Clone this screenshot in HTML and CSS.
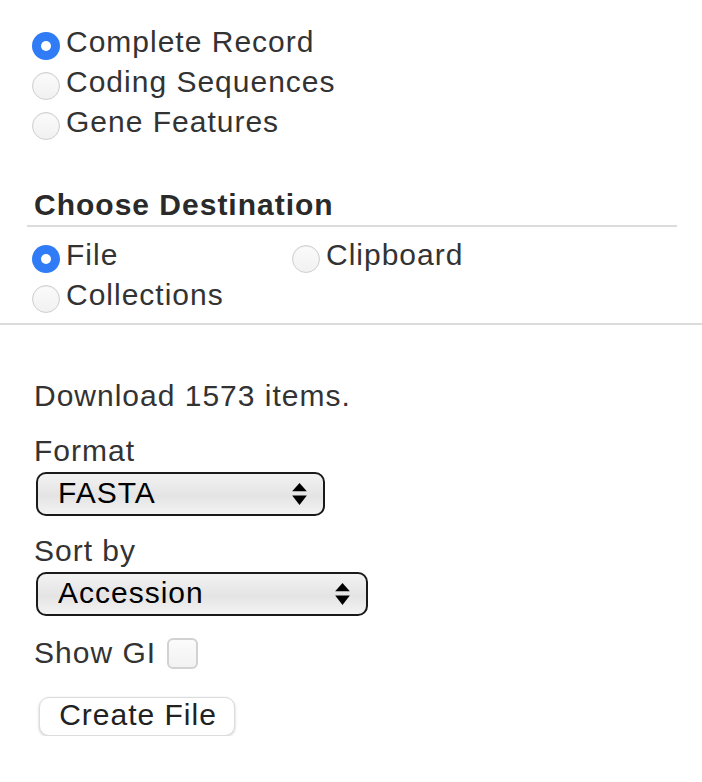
FILE: index.html
```html
<!DOCTYPE html>
<html>
<head>
<meta charset="utf-8">
<link rel="stylesheet" href="styles.css">
</head>
<body>
<div class="page">
  <div class="opts">
    <label class="row"><span class="radio checked"></span>Complete Record</label>
    <label class="row"><span class="radio"></span>Coding Sequences</label>
    <label class="row"><span class="radio"></span>Gene Features</label>
  </div>

  <div class="dest">
    <h3 class="dest-title">Choose Destination</h3>
    <div class="dest-grid">
      <label class="row"><span class="radio checked"></span>File</label>
      <label class="row"><span class="radio"></span>Clipboard</label>
      <label class="row"><span class="radio"></span>Collections</label>
    </div>
  </div>

  <div class="download">
    <div class="line first">Download 1573 items.</div>
    <div class="line gap-a">Format</div>
    <select class="sel sel-format"><option>FASTA</option></select>
    <div class="line gap-sm">Sort by</div>
    <select class="sel sel-sort"><option>Accession</option></select>
    <label class="line gap check-row">Show GI <span class="checkbox"></span></label>
    <button class="btn">Create File</button>
  </div>
</div>
</body>
</html>
```

FILE: styles.css
```css
* { box-sizing: border-box; }
html, body { margin: 0; padding: 0; background: #fff; }
body {
  font-family: "Liberation Sans", Arial, sans-serif;
  font-size: 30px;
  letter-spacing: 1px;
  color: #333;
}
.page { width: 702px; padding-top: 20px; }

.opts { padding-left: 34px; }
.row {
  display: block;
  height: 40px;
  padding-top: 4px;
  line-height: 36px;
  white-space: nowrap;
}
.radio {
  display: inline-block;
  width: 28px;
  height: 28px;
  margin: 0 6px 0 -2px;
  vertical-align: -8px;
  border-radius: 50%;
  background: linear-gradient(#fbfbfb, #f1f1f1);
  border: 1px solid #cfcfcf;
  box-shadow: inset 0 1px 1px rgba(0,0,0,0.05);
  position: relative;
}
.radio.checked {
  border: none;
  background: #2f7cf6;
  box-shadow: none;
}
.radio.checked::after {
  content: "";
  position: absolute;
  left: 9px;
  top: 9px;
  width: 10px;
  height: 10px;
  border-radius: 50%;
  background: #fff;
}

.dest {
  margin-top: 45px;
  padding-bottom: 10px;
  border-bottom: 2px solid #dcdcdc;
}
.dest-title {
  margin: 0 0 6px 27px;
  width: 650px;
  padding-left: 7px;
  height: 42px;
  line-height: 40px;
  font-size: 30px;
  font-weight: bold;
  color: #2a2a2a;
  border-bottom: 2px solid #dcdcdc;
}
.dest-grid {
  display: grid;
  grid-template-columns: 260px auto;
  padding-left: 34px;
}

.download { padding-left: 34px; }
.line {
  display: block;
  height: 40px;
  padding-top: 4px;
  line-height: 36px;
}
.line.first { margin-top: 49px; }
.line.gap-a { margin-top: 15px; }
.line.gap { margin-top: 17px; }
.line.gap-sm { margin-top: 13px; }

.sel {
  display: block;
  appearance: none;
  -webkit-appearance: none;
  margin: 3px 0 0 2px;
  height: 44px;
  padding: 0 40px 3px 20px;
  font-family: "Liberation Sans", Arial, sans-serif;
  font-size: 30px;
  letter-spacing: 1px;
  color: #000;
  border: 2px solid #1a1a1a;
  border-radius: 10px;
  background:
    url("data:image/svg+xml;utf8,<svg xmlns='http://www.w3.org/2000/svg' width='15' height='23' viewBox='0 0 14 22'><polygon points='7,0 14,8 0,8' fill='black'/><polygon points='0,12 14,12 7,21' fill='black'/></svg>") no-repeat right 16px center,
    linear-gradient(#f2f2f2, #e4e4e4 55%, #f3f3f3);
}
.sel-format { width: 289px; }
.sel-sort { width: 332px; }

.check-row {
  display: flex;
  align-items: center;
  padding-top: 0;
  white-space: pre;
}
.checkbox {
  display: inline-block;
  width: 31px;
  height: 31px;
  margin-left: 2px;
  border: 2px solid #d2d2d2;
  border-radius: 6px;
  background: linear-gradient(#fbfbfb, #f2f2f2);
}

.btn {
  display: block;
  margin: 24px 0 0 5px;
  width: 196px;
  height: 39px;
  padding: 0 0 3px 2px;
  font-family: "Liberation Sans", Arial, sans-serif;
  font-size: 30px;
  letter-spacing: 1px;
  color: #222;
  background: #fff;
  border: 1px solid #dcdcdc;
  border-radius: 10px;
  box-shadow: 0 1px 3px rgba(0,0,0,0.2);
}
```
